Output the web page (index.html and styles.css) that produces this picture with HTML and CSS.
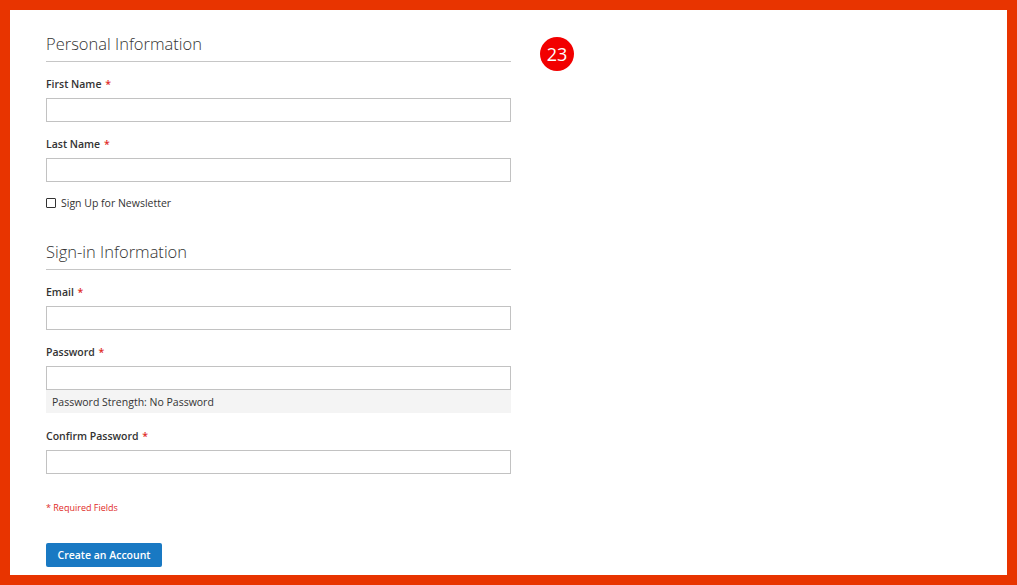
FILE: index.html
```html
<!DOCTYPE html>
<html>
<head>
<meta charset="utf-8">
<link rel="stylesheet" href="styles.css">
</head>
<body>
<div class="frame">
  <form class="form">
    <div class="legend">Personal Information</div>
    <div class="field">
      <label class="label">First Name <span class="req">*</span></label>
      <div class="input"></div>
    </div>
    <div class="field">
      <label class="label">Last Name <span class="req">*</span></label>
      <div class="input"></div>
    </div>
    <div class="check-row">
      <span class="checkbox"></span>
      <span class="check-label">Sign Up for Newsletter</span>
    </div>

    <div class="legend second">Sign-in Information</div>
    <div class="field">
      <label class="label">Email <span class="req">*</span></label>
      <div class="input"></div>
    </div>
    <div class="field">
      <label class="label">Password <span class="req">*</span></label>
      <div class="input"></div>
      <div class="strength">Password Strength: No Password</div>
    </div>
    <div class="field after-strength">
      <label class="label">Confirm Password <span class="req">*</span></label>
      <div class="input"></div>
    </div>
    <div class="required">* Required Fields</div>
    <div class="actions"><span class="button">Create an Account</span></div>
  </form>
  <div class="badge">23</div>
</div>
</body>
</html>
```
FILE: styles.css
```css
html, body {
  margin: 0;
  padding: 0;
}
body {
  background: #e83400;
  padding: 10px;
  width: 1017px;
  height: 585px;
  box-sizing: border-box;
  font-family: "Open Sans", "Liberation Sans", sans-serif;
  color: #333;
}
.frame {
  position: relative;
  background: #fff;
  width: 997px;
  height: 565px;
  padding-left: 36px;
  box-sizing: border-box;
  overflow: hidden;
}
.form {
  width: 465px;
  display: flex;
  flex-direction: column;
  padding-top: 23px;
}
.legend {
  font-size: 16.5px;
  font-weight: 300;
  line-height: 22px;
  color: #333;
  padding-bottom: 6px;
  border-bottom: 1px solid #c6c6c6;
}
.legend.second {
  margin-top: 31px;
}
.field {
  display: flex;
  flex-direction: column;
  margin-top: 15px;
}
.field.after-strength {
  margin-top: 16px;
}
.label {
  font-size: 10.5px;
  font-weight: 600;
  line-height: 14px;
  margin-bottom: 7px;
}
.req {
  color: #e02b27;
  margin-left: 1px;
}
.input {
  height: 24px;
  border: 1px solid #c2c2c2;
  box-sizing: border-box;
  background: #fff;
}
.strength {
  background: #f4f4f4;
  height: 23px;
  line-height: 24px;
  font-size: 10.5px;
  padding-left: 6px;
  color: #333;
}
.check-row {
  display: flex;
  align-items: center;
  margin-top: 14px;
  height: 14px;
}
.checkbox {
  width: 10px;
  height: 10px;
  border: 1px solid #333;
  box-sizing: border-box;
  border-radius: 1px;
}
.check-label {
  font-size: 10.5px;
  margin-left: 5px;
  line-height: 14px;
}
.required {
  margin-top: 28px;
  font-size: 9px;
  line-height: 12px;
  color: #e02b27;
}
.actions {
  margin-top: 29px;
  display: flex;
}
.button {
  background: #1979c3;
  color: #fff;
  font-size: 10.5px;
  font-weight: 600;
  height: 24px;
  line-height: 24px;
  border-radius: 2px;
  width: 116px;
  white-space: nowrap;
  box-sizing: border-box;
  text-align: center;
}
.badge {
  position: absolute;
  left: 530px;
  top: 27px;
  width: 34px;
  height: 34px;
  border-radius: 50%;
  background: #f20000;
  color: #fff;
  font-size: 18px;
  line-height: 34px;
  text-align: center;
}
```
